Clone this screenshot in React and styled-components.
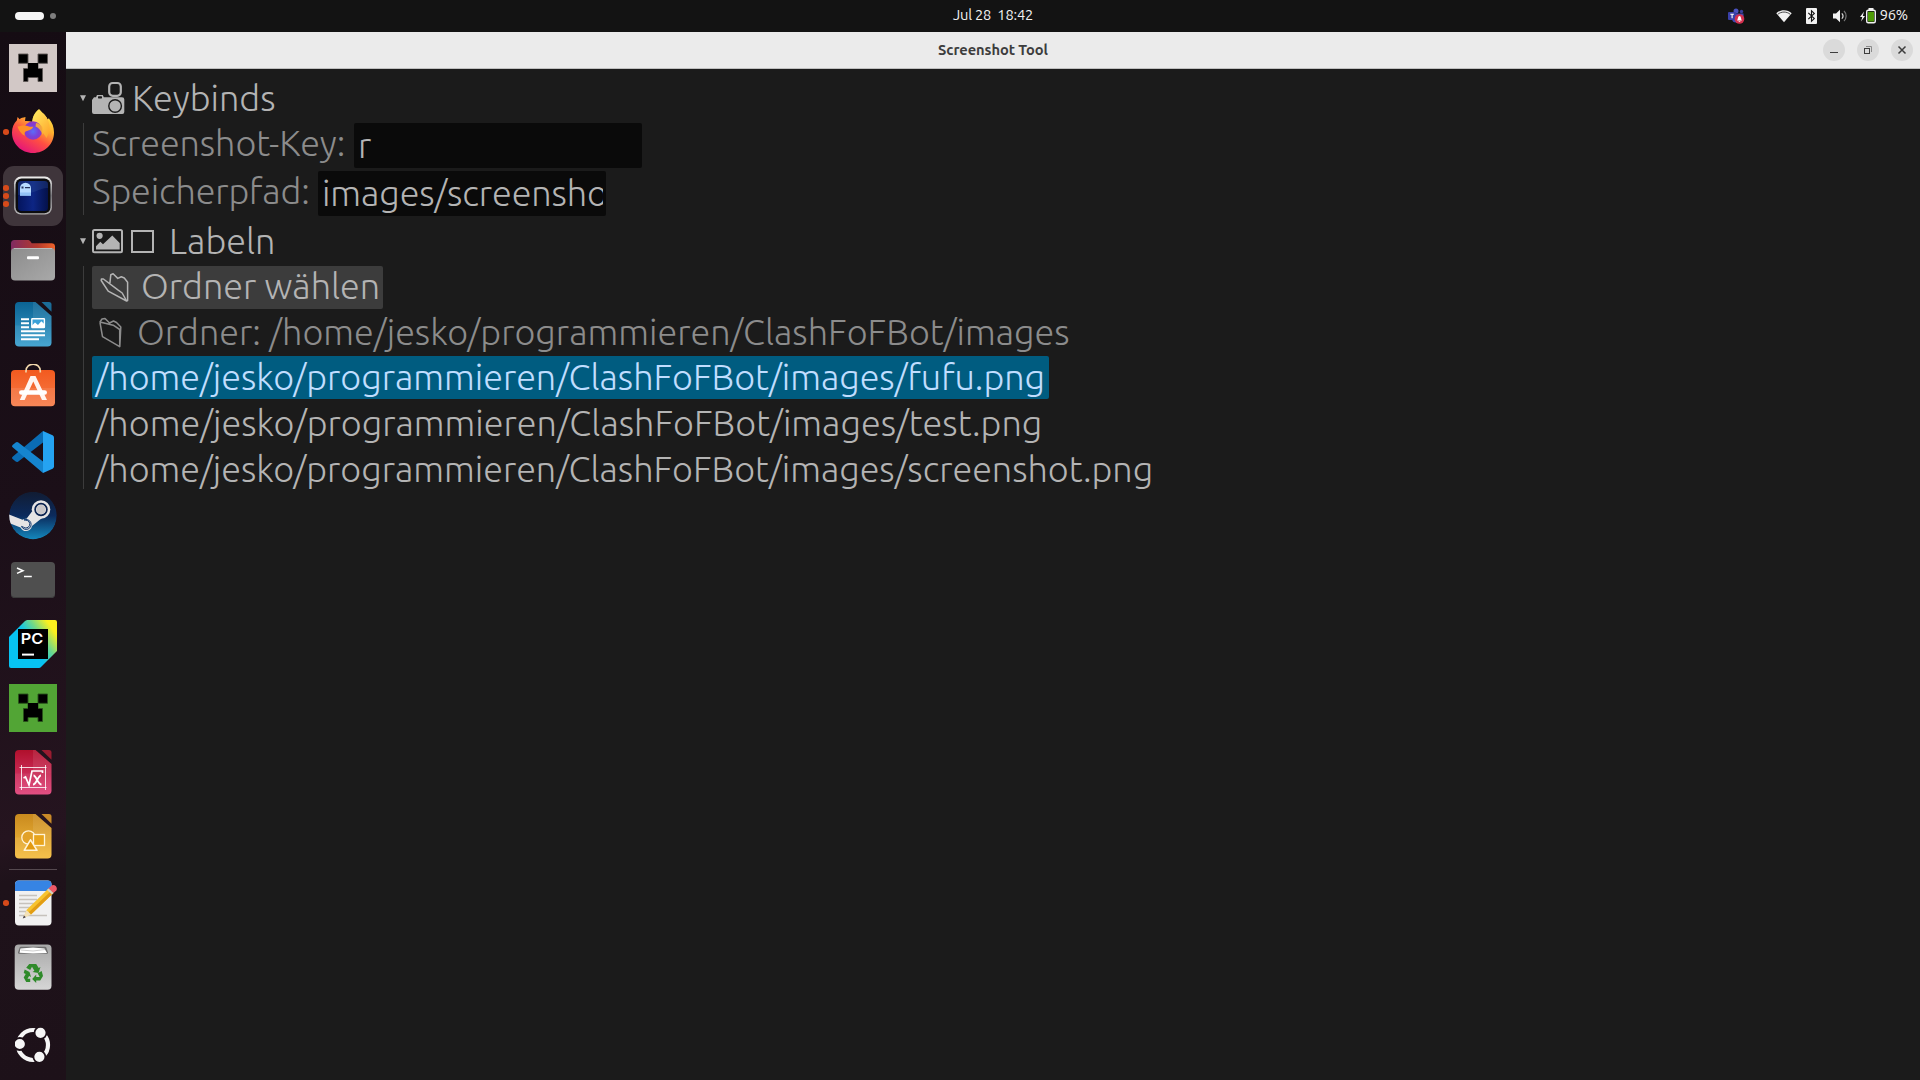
import React from "react";
import styled, { createGlobalStyle } from "styled-components";

const GlobalStyle = createGlobalStyle`
  * { box-sizing: border-box; }
  body { margin: 0; background: #1b1b1b; overflow: hidden; font-family: Ubuntu, "Open Sans", sans-serif; }
  svg { display: block; flex: none; }
`;

const Desktop = styled.div`
  width: 1920px;
  height: 1080px;
  display: grid;
  grid-template: 32px 1048px / 66px 1854px;
`;

/* ---------- top bar ---------- */
const TopBar = styled.header`
  grid-column: 1 / 3;
  display: grid;
  grid-template-columns: 1fr auto 1fr;
  align-items: center;
  background: #131313;
  color: #f2f2f2;
  font-size: 14.67px;
  line-height: 30px;
`;
const Workspaces = styled.div`
  display: flex;
  align-items: center;
  gap: 6px;
  padding-left: 15px;
`;
const Pill = styled.i`
  width: 29px;
  height: 8px;
  border-radius: 4px;
  background: #f6f6f6;
`;
const Dot = styled.i`
  width: 6px;
  height: 6px;
  border-radius: 50%;
  background: #7e7e7e;
`;
const Clock = styled.div`
  white-space: pre;
  padding: 0 0 2px 66px;
  letter-spacing: -0.2px;
`;
const Tray = styled.div`
  display: flex;
  justify-content: flex-end;
  align-items: center;
  padding-right: 12px;
`;
const TrayItem = styled.span`
  margin-right: ${(p) => p.$after}px;
`;
const Battery = styled.span`
  padding-bottom: 2px;
  letter-spacing: -0.2px;
`;

/* ---------- dock ---------- */
const Dock = styled.nav`
  display: flex;
  flex-direction: column;
  align-items: center;
  padding-top: 4px;
  background: linear-gradient(165deg, #150c13 0%, #1b0f18 45%, #25141f 76%, #1e121a 80%, #1d1119 100%);
`;
const Slot = styled.div`
  position: relative;
  flex: none;
  width: 66px;
  height: 64px;
  display: flex;
  align-items: center;
  justify-content: center;
`;
const Tile = styled.div`
  width: 60px;
  height: 60px;
  border-radius: 11px;
  background: ${(p) => (p.$active ? "#3f353b" : "transparent")};
  display: flex;
  align-items: center;
  justify-content: center;
`;
const Running = styled.div`
  position: absolute;
  left: 3px;
  top: 0;
  height: 64px;
  display: flex;
  flex-direction: column;
  justify-content: center;
  gap: 2.4px;
`;
const RunDot = styled.i`
  width: 5.6px;
  height: 5.6px;
  border-radius: 50%;
  background: #d64a1a;
`;
const Separator = styled.hr`
  width: 48px;
  height: 1px;
  margin: 1px 0;
  border: 0;
  flex: none;
  background: #55494f;
`;
const AppsButton = styled.div`
  margin-top: auto;
  padding-bottom: 17px;
`;

/* ---------- window ---------- */
const Window = styled.main`
  display: flex;
  flex-direction: column;
  background: #1b1b1b;
`;
const TitleBar = styled.div`
  height: 37px;
  flex: none;
  display: grid;
  grid-template-columns: 1fr auto 1fr;
  align-items: center;
  background: #ebebeb;
  border-bottom: 1px solid #bfbfbf;
`;
const Title = styled.h1`
  grid-column: 2;
  margin: 0;
  font-size: 14.67px;
  font-weight: 700;
  line-height: 36px;
  letter-spacing: -0.06px;
  color: #3d3d3d;
`;
const Controls = styled.div`
  display: flex;
  justify-content: flex-end;
  gap: 12px;
  padding-right: 7px;
`;
const Control = styled.button`
  width: 22px;
  height: 22px;
  padding: 0;
  border: 0;
  border-radius: 50%;
  background: #dadada;
  display: flex;
`;
const Panel = styled.section`
  display: flex;
  flex-direction: column;
  padding: 9px 0 0 13px;
  font-size: 36px;
  font-weight: 300;
  line-height: 40px;
  white-space: pre;
  color: #b4b4b4;
`;
const Heading = styled.div`
  display: flex;
  height: 45px;
  align-items: flex-start;
`;
const HeadingText = styled.span`
  margin-left: ${(p) => p.$gap}px;
`;
const Body = styled.div`
  display: flex;
  flex-direction: column;
  align-items: flex-start;
  gap: 3px;
  margin: 0 0 ${(p) => p.$after || 0}px 4px;
  padding-left: 8px;
  border-left: 1px solid #3c3c3c;
  height: ${(p) => p.$h}px;
`;
const Field = styled.label`
  display: flex;
  flex: none;
  height: 45px;
  color: #8c8c8c;
`;
const FieldName = styled.span`
  width: ${(p) => p.$w}px;
  letter-spacing: ${(p) => p.$track}px;
`;
const Input = styled.span`
  width: 288px;
  height: 45px;
  padding: 2px 3px 0 4px;
  border-radius: 2px;
  background: #0a0a0a;
  color: #b4b4b4;
  letter-spacing: -0.1px;
`;
const Clip = styled.span`
  display: block;
  height: 43px;
  overflow: hidden;
`;
const Button = styled.button`
  display: flex;
  flex: none;
  align-items: flex-start;
  height: 43px;
  width: 291px;
  padding: 0 5px 0 8px;
  border: 0;
  border-radius: 2px;
  background: #3c3c3c;
  font: inherit;
  color: #b4b4b4;
  gap: 11px;
`;
const FolderLine = styled.div`
  display: flex;
  flex: none;
  align-items: flex-start;
  height: 41px;
  padding-left: 7px;
  gap: 12px;
  color: #8c8c8c;
`;
const FileRow = styled.div`
  flex: none;
  height: 43px;
  padding: 1px 4px 0 3.5px;
  border-radius: 2px;
  letter-spacing: ${(p) => p.$track}px;
  background: ${(p) => (p.$selected ? "#005c80" : "transparent")};
  color: ${(p) => (p.$selected ? "#c0deff" : "#b4b4b4")};
`;

/* ---------- dock icons ---------- */
const Icon = ({ children, size = 48 }) => (
  <svg width={size} height={size} viewBox="0 0 48 48">{children}</svg>
);

const Creeper = ({ bg, edge }) => (
  <Icon>
    <rect width="48" height="48" fill={bg} />
    <path d="M9.500 10h9.500v9.300H9.500zM29 10H38.500v9.300H29zM19 19.500h10v5h4.500V37.500h-4.500v-4H19v4h-4.500V24.500h4.500z" fill="#000" stroke={edge} strokeWidth=".9" />
    <path d="M19 19h10v6H19z" fill="#000" />
  </Icon>
);

const Firefox = () => (
  <Icon>
    <defs>
      <linearGradient id="ffA" x1=".85" y1="0" x2=".25" y2="1">
        <stop offset="0" stopColor="#fff44f" /><stop offset=".35" stopColor="#ffb02e" /><stop offset=".62" stopColor="#ff4f42" /><stop offset="1" stopColor="#e2107f" />
      </linearGradient>
      <radialGradient id="ffB" cx=".5" cy=".55" r=".6">
        <stop offset="0" stopColor="#5b6df8" /><stop offset=".5" stopColor="#7a41d8" /><stop offset="1" stopColor="#9a32b8" />
      </radialGradient>
      <linearGradient id="ffC" x1="0" y1="0" x2="1" y2="1">
        <stop offset="0" stopColor="#fff36a" /><stop offset="1" stopColor="#ffa128" />
      </linearGradient>
    </defs>
    <path d="M30 1.300c2.500 3 7 5.800 8.600 10.200l1.200-1.200c3.600 4.500 5.200 9 5.200 14.200C45 36.500 35.600 45 24 45S3 36 3 24.500c0-5.500 2-9.200 4.800-12l.8-3.500 2 2.200C12.300 9.800 13.800 9.600 16.500 9l-.5 4c2.500-.2 5 0 7.500 1L24 9.500C25.200 6 27.500 3 30 1.300z" fill="url(#ffA)" />
    <path d="M30 1.300c2.500 3 7 5.800 8.600 10.200 3 6 3 12-1.200 18.500-2.900-5-6.900-11-13.900-13.500C22 11 26 4 30 1.300z" fill="url(#ffC)" opacity=".9" />
    <circle cx="24" cy="22.500" r="9.200" fill="url(#ffB)" />
    <path d="M8.500 18.500c4.500-1 7.500-1.600 10-.5 2 .8 3.500.8 5.800.8-1.300 3-4.300 3.700-7.300 4.400-1.500.5-1.800 2.500-1 4.500C12.500 26.500 10 23 8.500 18.500z" fill="#ff9128" />
    <path d="M27 15c6 1 9 6 6.500 12-1.300-4.500-3.500-7-7-8.500z" fill="#ffb52e" opacity=".85" />
  </Icon>
);

const ScreenshotApp = () => (
  <Icon>
    <defs>
      <linearGradient id="ssA" x1="0" y1="0" x2="1" y2="0"><stop offset="0" stopColor="#04155e" /><stop offset=".5" stopColor="#0d2584" /><stop offset="1" stopColor="#04114a" /></linearGradient>
      <linearGradient id="ssB" x1="0" y1="0" x2="0" y2="1"><stop offset="0" stopColor="#f0efee" /><stop offset=".5" stopColor="#77767b" /><stop offset="1" stopColor="#b5b3b4" /></linearGradient>
    </defs>
    <rect x="5" y="4.600" width="38" height="38" rx="7" fill="url(#ssB)" />
    <rect x="6.600" y="6.600" width="34.800" height="34.600" rx="6" fill="#0c0c0e" />
    <rect x="9" y="9" width="30" height="30" rx="3.500" fill="url(#ssA)" />
    <path d="M9 12.500a3.300 3.300 0 0 1 3.300-3.400h23.400A3.300 3.300 0 0 1 39 12.500V16c-9 0-13 6-30 7z" fill="#35599c" opacity=".28" />
    <path d="M11 23.800v-7.600a5.500 5.500 0 0 1 11 0v7.600z" fill="#b7dbff" />
    <path d="M12.500 14.500h2v2h-2zM16 15h5v1.200h-5z" fill="#26345e" />
    <path d="M11 20.500h11v3.300H11z" fill="#79b1ee" opacity=".6" />
  </Icon>
);

const Files = () => (
  <Icon>
    <defs>
      <linearGradient id="fiA" x1="0" x2="1"><stop offset="0" stopColor="#7f2a62" /><stop offset=".6" stopColor="#b4392c" /><stop offset="1" stopColor="#f0622a" /></linearGradient>
      <linearGradient id="fiB" x1="0" x2="1" y2="1"><stop offset="0" stopColor="#8c8c8c" /><stop offset="1" stopColor="#a9a9a9" /></linearGradient>
    </defs>
    <path d="M2 18V7.500A3.500 3.500 0 0 1 5.500 4h13c1.500 0 2.300.6 3.200 1.800l1 1.400H42.500A3.500 3.500 0 0 1 46 10.500V18z" fill="url(#fiA)" />
    <rect x="2" y="12" width="44" height="32.500" rx="4" fill="url(#fiB)" />
    <path d="M5 12.500h38" stroke="#c4c4c4" strokeWidth=".8" />
    <rect x="18" y="20.200" width="12" height="3" rx="1" fill="#fff" />
  </Icon>
);

const DocShape = ({ id, from, to, ear, children }) => (
  <Icon>
    <defs>
      <linearGradient id={id} x1="0" y1="0" x2="0" y2="1"><stop offset="0" stopColor={from} /><stop offset="1" stopColor={to} /></linearGradient>
    </defs>
    <path d="M10 2h16.500L42.500 16v26.500a4 4 0 0 1-4 4H10a4 4 0 0 1-4-4V6a4 4 0 0 1 4-4z" fill={`url(#${id})`} />
    <path d="M24 2h2.500L42.500 16v9.500H24z" fill="#fff" opacity=".09" />
    <path d="M6 25.500h36.500V42.500a4 4 0 0 1-4 4H10a4 4 0 0 1-4-4z" fill="#fff" opacity=".07" />
    <path d="M32.500 2H40a2.500 2.500 0 0 1 2.500 2.500v7.300z" fill={ear} />
    {children}
  </Icon>
);

const Writer = () => (
  <DocShape id="wr" from="#0b6393" to="#3a9fce" ear="#1b6c97">
    <path d="M12 19.300h8M12 23.200h8M12 27.200h8M12 31.200h24M12 35.200h24M12 39.200h18" stroke="#fff" strokeWidth="2" />
    <rect x="22.800" y="18.800" width="12.600" height="8.800" rx=".5" fill="#3aa1d8" stroke="#fff" strokeWidth="1.400" />
    <path d="M23 27.500v-2l3-3 3 2.600 3.300-3.800 3 2.700v3.500z" fill="#fff" />
  </DocShape>
);

const MathApp = () => (
  <DocShape id="ma" from="#b0102c" to="#e0427a" ear="#9a1c30">
    <path d="M10.500 19.500h27M10.500 39.500h27M12.500 17v25M36.500 17v25" stroke="#fff" strokeWidth=".9" opacity=".9" fill="none" />
    <path d="M14.500 30l2-1 3.500 8 3-14h10.500v2" stroke="#fff" strokeWidth="1.700" fill="none" />
    <path d="M24.500 27.500c3 0 4 9 8 9M32 27.500c-3 0-4.500 9-8 9" stroke="#fff" strokeWidth="1.800" fill="none" />
  </DocShape>
);

const Draw = () => (
  <DocShape id="dr" from="#c98a1e" to="#f5bd3f" ear="#c98a28">
    <circle cx="19.500" cy="25.500" r="6.700" fill="#e3a228" stroke="#fff3d6" strokeWidth="1.300" />
    <rect x="24.500" y="22.500" width="11" height="11" fill="#e8a41c" stroke="#fff3d6" strokeWidth="1.300" />
    <path d="M21.500 27.800L28 38.300H15.200z" fill="#e29a10" stroke="#fff3d6" strokeWidth="1.600" strokeLinejoin="round" />
  </DocShape>
);

const Software = () => (
  <Icon>
    <defs><linearGradient id="so" x1="0" y1="0" x2="0" y2="1"><stop offset="0" stopColor="#f25a1f" /><stop offset="1" stopColor="#f77b48" /></linearGradient></defs>
    <rect x="2" y="6" width="44" height="36.300" rx="4" fill="url(#so)" />
    <path d="M2 24h44v14.300a4 4 0 0 1-4 4H6a4 4 0 0 1-4-4z" fill="#fff" opacity=".09" />
    <path d="M17 8.500V7c0-9 14.300-9 14.300 0v1.500" stroke="#f3d9ad" strokeWidth="1.600" fill="none" />
    <path d="M21.500 12h5L38 36h-5L24.300 17.500 15.600 36h-4.800z" fill="#fff" opacity=".93" />
    <rect x="10" y="26.200" width="28" height="4.600" rx="2.300" fill="#fff" />
  </Icon>
);

const VSCode = () => (
  <Icon>
    <path d="M34 3v11.500L9 33.700a2 2 0 0 1-2.300-.1L3.600 31a1.500 1.500 0 0 1 0-2.300z" fill="#0a6cb4" />
    <path d="M34 45V33.500L9 14.300a2 2 0 0 0-2.300.1L3.600 17a1.500 1.500 0 0 0 0 2.300z" fill="#1585cf" />
    <path d="M34 3l9.600 4.300A2.500 2.500 0 0 1 45 9.500v29a2.500 2.500 0 0 1-1.400 2.200L34 45z" fill="#25a3f2" />
  </Icon>
);

const Steam = () => (
  <Icon>
    <defs>
      <linearGradient id="st" x1="0" y1="0" x2="0" y2="1"><stop offset="0" stopColor="#111c33" /><stop offset=".5" stopColor="#0b2a5c" /><stop offset="1" stopColor="#1488bd" /></linearGradient>
      <clipPath id="stc"><circle cx="24" cy="23.600" r="23.800" /></clipPath>
    </defs>
    <g clipPath="url(#stc)">
      <circle cx="24" cy="23.600" r="23.800" fill="url(#st)" />
      <path d="M0 22.500l13.500 5.200c1.300-.8 2.500-1.100 4-1L23 19.500 33 26l-10 8c-1 6-9 7-11.500 1.500L0 31z" fill="#e6e4e4" />
      <circle cx="32" cy="17.500" r="9.300" fill="#e6e4e4" />
      <circle cx="32" cy="17.500" r="5.900" fill="#e6e4e4" stroke="#0b2350" strokeWidth="1.700" />
      <circle cx="32" cy="17.500" r="4.500" fill="#c9c6c8" />
      <path d="M12.500 34.400l2 .8A3.900 3.900 0 1 0 17 28.200l-2-.3A5 5 0 1 1 12.500 34.400" fill="none" stroke="#123a70" strokeWidth="1" />
    </g>
  </Icon>
);

const IconText = styled.text`
  font-family: ${(p) => p.$font};
  font-weight: ${(p) => p.$weight};
  font-size: ${(p) => p.$size}px;
  fill: #fff;
`;

const Terminal = () => (
  <Icon>
    <rect x="2" y="6" width="44" height="36" rx="4" fill="#4f4f4f" />
    <path d="M2 37v1a4 4 0 0 0 4 4h36a4 4 0 0 0 4-4v-1a4 4 0 0 1-4 4H6a4 4 0 0 1-4-4z" fill="#3c3c3c" />
    <path d="M8 12l6 2.800L8 17.400" stroke="#fff" strokeWidth="1.500" fill="none" />
    <path d="M15 20.500h7.800" stroke="#fff" strokeWidth="1.500" />
  </Icon>
);

const PyCharm = () => (
  <Icon>
    <defs><linearGradient id="py" x1="0" y1=".7" x2="1" y2="0"><stop offset=".4" stopColor="#07c3f2" /><stop offset=".62" stopColor="#6fd88a" /><stop offset=".85" stopColor="#fcf01e" /></linearGradient></defs>
    <path d="M18 0h28a2 2 0 0 1 2 2v29L32 47a3 3 0 0 1-2 1H2a2 2 0 0 1-2-2V17L16 1z" fill="url(#py)" />
    <rect x="9" y="9" width="30" height="30" fill="#000" />
    <IconText x="11.800" y="24.300" $size={15} $weight={600} $font='Inter, "Liberation Sans", sans-serif' textLength="22.500" lengthAdjust="spacingAndGlyphs">PC</IconText>
    <rect x="13" y="33.600" width="12" height="2" fill="#fff" />
  </Icon>
);

const Editor = () => (
  <Icon>
    <rect x="6" y="1.500" width="36.500" height="45" rx="4" fill="#f1f1f1" />
    <path d="M6 12V5.500a4 4 0 0 1 4-4h28.500a4 4 0 0 1 4 4V12z" fill="#3684e4" />
    <path d="M10 16.500h18M10 20.500h18M10 24.500h16M10 28.500h16M10 32.500h12M10 36.500h28" stroke="#c6c2bc" strokeWidth="1.600" />
    <path d="M15 38l2.500-7L39.500 9.500l5 4.500L22 35.500z" fill="#f7c32e" />
    <path d="M19.500 33.500L42 12l2.500 2L22 35.500z" fill="#e29d14" />
    <path d="M13.800 39.500l3.700-8.500 4.500 4.500z" fill="#f3e1b8" />
    <path d="M13.800 39.500l1.200-3 1.800 1.800z" fill="#3d3846" />
    <path d="M39.500 9.500l2.800-2.800c3-2 7 1.500 5 4.800L44.500 14z" fill="#ee5a69" />
    <path d="M38 11l1.500-1.500 5 4.500-1.400 1.400z" fill="#d5cfc6" />
  </Icon>
);

const Trash = () => (
  <Icon>
    <defs><linearGradient id="tr" x1="0" y1="0" x2="0" y2="1"><stop offset="0" stopColor="#a8a8a8" /><stop offset="1" stopColor="#d6d6d6" /></linearGradient></defs>
    <rect x="5.700" y="1.600" width="36.800" height="45.200" rx="4" fill="url(#tr)" />
    <path d="M9 9.500l1.500-4.500c.4-1 1-1.200 2-1.200h23c1 0 1.600.2 2 1.200L39 9.500c0 1-.5 1.300-1.500 1.300h-27C9.500 10.800 9 10.500 9 9.500z" fill="#6d6d6d" />
    <path d="M10.500 9.800l1-4.300L24 4.500l11.500 1L38 10l-14 .5z" fill="#fff" />
    <path d="M12 7l12 1 12-1.500" stroke="#b8b8b8" strokeWidth=".7" fill="none" />
    <g fill="#2f8a2a" transform="translate(-.3 -.6)">
      <path d="M20.500 21.500h7l2.500 4 1.800-1-2 6-6-1 1.900-1.100-2.400-4-1.800 3.200-4-2.300z" />
      <path d="M16 27l4.800 2.500 1.500 5-1.900-1-1.600 2.800h2.700v3.300h-4L15 35l2-3.500-2-1z" />
      <path d="M33 28.500l-4 2.300 2 3.700h-3.500v-2.300l-4 4.300 4 4V38h4l2.800-4.500z" />
    </g>
  </Icon>
);

const UbuntuLogo = () => (
  <svg width="36" height="36" viewBox="0 0 36 36">
    <circle cx="18" cy="18" r="15" fill="none" stroke="#f6f6f6" strokeWidth="4.200" />
    {[[4.800, 17], [25.500, 5.800], [24.400, 29.800]].map(([x, y]) => (
      <circle key={x} cx={x} cy={y} r="6" fill="#f6f6f6" stroke="#1d1119" strokeWidth="1.800" />
    ))}
  </svg>
);

/* ---------- content icons ---------- */
const Triangle = () => (
  <svg width="13" height="40" viewBox="0 0 13 40"><path d="M1 17.200h6L4 23.200z" fill="#b4b4b4" /></svg>
);
const Camera = () => (
  <svg width="33" height="40" viewBox="0 0 33 40">
    <path d="M2 36a2 2 0 0 1-2-2V22l2-2.700h2l1-2.200h5.800l1 2.200H30a2.300 2.300 0 0 1 2.300 2.300V34a2 2 0 0 1-2 2z" fill="#b4b4b4" />
    <rect x="6" y="18.200" width="4" height="2.200" rx=".6" fill="#1b1b1b" />
    <rect x="17.200" y="5" width="11.600" height="12.800" rx="3.500" fill="#1b1b1b" stroke="#b4b4b4" strokeWidth="2.200" />
    <circle cx="23.100" cy="28" r="6.300" fill="#b4b4b4" stroke="#1b1b1b" strokeWidth="1.400" />
  </svg>
);
const Picture = () => (
  <svg width="31" height="40" viewBox="0 0 31 40">
    <rect x="1" y="9" width="29" height="22.300" rx="1.500" fill="none" stroke="#b4b4b4" strokeWidth="2" />
    <circle cx="7.600" cy="14.800" r="3.100" fill="#b4b4b4" />
    <path d="M4 28.500v-3.200l4.300-4.600 2.700 2.600 9.300-8.800 7.400 7.500v6.500z" fill="#b4b4b4" />
  </svg>
);
const Square = styled.i`
  width: 23px;
  height: 23px;
  margin: 9px 0 0 8px;
  border: 2px solid #b4b4b4;
`;
const OpenFolder = () => (
  <svg width="30" height="43" viewBox="0 0 30 43" fill="none" stroke="#b4b4b4" strokeWidth="1.500" strokeLinejoin="round">
    <path d="M9.800 18.200l1-9.500 2.300-.9 4.700 4.600 3.500-1.600 3 1.200 3.300 4.200v18.300L26.600 35 8.200 25.200 1.200 14.500l.2-1.500h2l14.800 11.200 4 2.800 4.400 8" />
  </svg>
);
const ClosedFolder = () => (
  <svg width="26" height="41" viewBox="0 0 26 41" fill="none" stroke="#8c8c8c" strokeWidth="1.500" strokeLinejoin="round">
    <path d="M1 10.500l2.500 14.200 17.200 10V17.500L14.200 13.200 1 10l2-3 3-.6L10.500 11l4-2 3 1.500 4.300 4.500-1 19.700" />
  </svg>
);

/* ---------- tray icons ---------- */
const Teams = () => (
  <svg width="17" height="16" viewBox="0 0 17 16">
    <circle cx="8" cy="3" r="2.500" fill="#4a52c0" /><circle cx="13.500" cy="3.500" r="1.700" fill="#3a3f9c" />
    <path d="M4 5.500h11.500V11a4 4 0 0 1-4 3.500H8A4 4 0 0 1 4 11z" fill="#4048b4" />
    <rect x="0" y="4" width="8" height="8" rx="1" fill="#3a40a8" />
    <path d="M2.300 6.300h3.600M4.100 6.300v4" stroke="#fff" strokeWidth="1.100" />
    <circle cx="11.500" cy="11" r="4.800" fill="#d5304f" />
    <path d="M9 12.500c1-1 .7-4.500 2.500-4.500S13 11.500 14 12.500zM10.700 13h1.600v.8h-1.600z" fill="#fff" />
  </svg>
);
const Wifi = () => (
  <svg width="16" height="14" viewBox="0 0 16 14">
    <path d="M.3 4.200C4.500.1 11.500.1 15.700 4.200L8 13.300z" fill="#f2f2f2" />
    <path d="M1.800 5.300c3.600-3 8.800-3 12.400 0" stroke="#131313" strokeWidth="1" fill="none" opacity=".75" />
  </svg>
);
const Bluetooth = () => (
  <svg width="11" height="16" viewBox="0 0 11 16">
    <rect width="11" height="16" rx="1" fill="#f2f2f2" />
    <path d="M2.300 4.800l6 5.800-2.800 2.600V2.800l2.800 2.600-6 5.800" stroke="#131313" strokeWidth="1.100" fill="none" />
  </svg>
);
const Volume = () => (
  <svg width="15" height="14" viewBox="0 0 15 14">
    <path d="M0 4.500h3L7 .8v12.400L3 9.500H0z" fill="#f2f2f2" />
    <path d="M8.800 4.300c1.400 1.500 1.400 3.900 0 5.400" stroke="#d8d8d8" strokeWidth="1.200" fill="none" />
    <path d="M11 2c2.800 2.700 2.800 7.300 0 10" stroke="#777" strokeWidth="1.200" fill="none" />
  </svg>
);
const BatteryIcon = () => (
  <svg width="16" height="16" viewBox="0 0 16 16">
    <path d="M4 3.500L0 9h2.300L1 13.500 5 8H2.800z" fill="#f2f2f2" />
    <rect x="6.700" y="2.200" width="8.600" height="12.600" rx="1.500" fill="none" stroke="#f2f2f2" strokeWidth="1.400" />
    <rect x="8.500" y="0" width="5" height="2" fill="#f2f2f2" />
    <rect x="8" y="3.800" width="6" height="9.700" fill="#4e9a06" />
  </svg>
);

const apps = [
  { id: "launcher", icon: <Creeper bg="#d2c8c6" edge="#5d5856" /> },
  { id: "firefox", icon: <Firefox />, dots: 1 },
  { id: "screenshot", icon: <ScreenshotApp />, dots: 3, active: true },
  { id: "files", icon: <Files /> },
  { id: "writer", icon: <Writer /> },
  { id: "software", icon: <Software /> },
  { id: "vscode", icon: <VSCode /> },
  { id: "steam", icon: <Steam /> },
  { id: "terminal", icon: <Terminal /> },
  { id: "pycharm", icon: <PyCharm /> },
  { id: "minecraft", icon: <Creeper bg="#52a535" edge="#29521b" /> },
  { id: "math", icon: <MathApp /> },
  { id: "draw", icon: <Draw /> },
  { separator: true, id: "sep" },
  { id: "editor", icon: <Editor />, dots: 1 },
  { id: "trash", icon: <Trash /> },
];

const base = "/home/jesko/programmieren/ClashFoFBot/images";
const files = [
  { name: "fufu.png", track: -0.03 },
  { name: "test.png", track: 0 },
  { name: "screenshot.png", track: -0.03 },
];

export default function App() {
  return (
    <>
      <GlobalStyle />
      <Desktop>
        <TopBar>
          <Workspaces><Pill /><Dot /></Workspaces>
          <Clock>{"Jul 28  18:42"}</Clock>
          <Tray>
            <TrayItem $after={31}><Teams /></TrayItem>
            <TrayItem $after={14}><Wifi /></TrayItem>
            <TrayItem $after={16}><Bluetooth /></TrayItem>
            <TrayItem $after={12}><Volume /></TrayItem>
            <TrayItem $after={4}><BatteryIcon /></TrayItem>
            <Battery>96%</Battery>
          </Tray>
        </TopBar>
        <Dock>
          {apps.map((a) =>
            a.separator ? (
              <Separator key={a.id} />
            ) : (
              <Slot key={a.id}>
                {a.dots && (
                  <Running>{Array.from({ length: a.dots }, (_, i) => <RunDot key={i} />)}</Running>
                )}
                <Tile $active={a.active}>{a.icon}</Tile>
              </Slot>
            )
          )}
          <AppsButton><UbuntuLogo /></AppsButton>
        </Dock>
        <Window>
          <TitleBar>
            <Title>Screenshot Tool</Title>
            <Controls>
              <Control><svg width="22" height="22"><path d="M7 13.500h8" stroke="#3d3d3d" /></svg></Control>
              <Control><svg width="22" height="22" fill="none"><rect x="7.500" y="9.500" width="5" height="5" stroke="#3d3d3d" /><path d="M9 7.500h5.500V13" stroke="#8a8a8a" /></svg></Control>
              <Control><svg width="22" height="22"><path d="M7.500 7.500l7 7M14.500 7.500l-7 7" stroke="#3d3d3d" strokeWidth="1.500" /></svg></Control>
            </Controls>
          </TitleBar>
          <Panel>
            <Heading>
              <Triangle /><Camera /><HeadingText $gap={7}>Keybinds</HeadingText>
            </Heading>
            <Body $h={92} $after={6}>
              <Field><FieldName $w={262} $track={-0.07}>Screenshot-Key:</FieldName><Input><Clip>r</Clip></Input></Field>
              <Field><FieldName $w={226} $track={-0.15}>Speicherpfad:</FieldName><Input><Clip>images/screenshot.png</Clip></Input></Field>
            </Body>
            <Heading>
              <Triangle /><Picture /><Square /><HeadingText $gap={15}>Labeln</HeadingText>
            </Heading>
            <Body $h={223}>
              <Button><OpenFolder />Ordner wählen</Button>
              <FolderLine><ClosedFolder />Ordner: {base}</FolderLine>
              {files.map((f, i) => (
                <FileRow key={f.name} $selected={i === 0} $track={f.track}>{`${base}/${f.name}`}</FileRow>
              ))}
            </Body>
          </Panel>
        </Window>
      </Desktop>
    </>
  );
}
